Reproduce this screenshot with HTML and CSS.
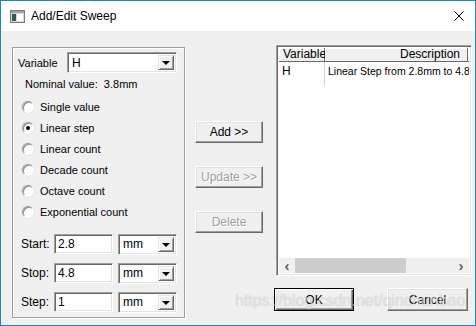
FILE: index.html
```html
<!DOCTYPE html>
<html lang="en">

<head>
    <meta charset="UTF-8">
    <title>Add/Edit Sweep</title>
    <link rel="stylesheet" href="styles.css">
</head>

<body>
    <div class="window">
        <div class="titlebar">
            <svg class="app-icon" width="15" height="13" viewBox="0 0 15 13">
                <rect x="0.5" y="0.5" width="14" height="12" fill="#d8d8d8" stroke="#7a7a7a"/>
                <rect x="1" y="1" width="13" height="2" fill="#9aa4a8"/>
                <rect x="2" y="4" width="4" height="7" fill="#2f5a58"/>
                <rect x="7" y="4" width="6" height="7" fill="#ffffff"/>
            </svg>
            <span class="title">Add/Edit Sweep</span>
            <svg class="close" width="10" height="10" viewBox="0 0 10 10">
                <path d="M0.5 0.5 L9.5 9.5 M9.5 0.5 L0.5 9.5" stroke="#000" stroke-width="1"/>
            </svg>
        </div>

        <div class="client">
            <div class="group">
                <div class="var-row">
                    <span class="var-label">Variable</span>
                    <div class="combo combo-var">
                        <span class="combo-text">H</span>
                        <span class="drop"><i></i></span>
                    </div>
                </div>

                <div class="nominal">Nominal value:&nbsp; 3.8mm</div>

                <div class="radios">
                    <div class="radio-row"><span class="radio"></span>Single value</div>
                    <div class="radio-row"><span class="radio checked"></span>Linear step</div>
                    <div class="radio-row"><span class="radio"></span>Linear count</div>
                    <div class="radio-row"><span class="radio"></span>Decade count</div>
                    <div class="radio-row"><span class="radio"></span>Octave count</div>
                    <div class="radio-row"><span class="radio"></span>Exponential count</div>
                </div>

                <div class="range">
                    <div class="range-row">
                        <span class="range-label">Start:</span>
                        <div class="field">2.8</div>
                        <div class="combo combo-unit">
                            <span class="combo-text">mm</span>
                            <span class="drop"><i></i></span>
                        </div>
                    </div>
                    <div class="range-row">
                        <span class="range-label">Stop:</span>
                        <div class="field">4.8</div>
                        <div class="combo combo-unit">
                            <span class="combo-text">mm</span>
                            <span class="drop"><i></i></span>
                        </div>
                    </div>
                    <div class="range-row">
                        <span class="range-label">Step:</span>
                        <div class="field">1</div>
                        <div class="combo combo-unit">
                            <span class="combo-text">mm</span>
                            <span class="drop"><i></i></span>
                        </div>
                    </div>
                </div>
            </div>

            <div class="actions">
                <button class="btn">Add &gt;&gt;</button>
                <button class="btn" disabled>Update &gt;&gt;</button>
                <button class="btn" disabled>Delete</button>
            </div>

            <div class="right">
                <div class="list">
                    <div class="list-body">
                        <div class="list-head">
                            <div class="col col-var">Variable</div>
                            <div class="col col-desc">Description</div>
                            <div class="col col-rest"></div>
                        </div>
                        <div class="list-row">
                            <div class="cell col-var">H</div>
                            <div class="cell col-desc">Linear Step from 2.8mm to 4.8mm</div>
                        </div>
                    </div>
                    <div class="hscroll">
                        <span class="arrow">&#8249;</span>
                        <div class="track"><div class="thumb"></div></div>
                        <span class="arrow">&#8250;</span>
                    </div>
                </div>
                <div class="footer">
                    <button class="btn btn-default">OK</button>
                    <button class="btn btn-cancel">Cancel</button>
                </div>
            </div>
        </div>

        <div class="watermark">https://blog.csdn.net/qinchunbao</div>
    </div>
</body>

</html>
```

FILE: styles.css
```css
* {
    box-sizing: border-box;
}

body {
    margin: 0;
    font-family: 'Liberation Sans', Arial, sans-serif;
    font-size: 11px;
    color: #000;
}

.window {
    position: relative;
    width: 476px;
    height: 326px;
    border: 1px solid #1883d7;
    background: #f0f0f0;
    overflow: hidden;
}

.titlebar {
    height: 30px;
    background: #fff;
    display: flex;
    align-items: center;
    padding-left: 9px;
    font-size: 12px;
}

.app-icon {
    margin-right: 6px;
}

.title {
    flex: 1;
}

.close {
    margin-right: 11px;
}

.client {
    display: flex;
    padding: 16px 0 0 11px;
}

/* left group box */
.group {
    width: 173px;
    height: 271px;
    border: 1px solid #a0a0a0;
    box-shadow: inset 1px 1px #fff, 1px 1px #fff;
    padding: 4px 0 0 5px;
}

.var-row {
    display: flex;
    align-items: center;
    height: 21px;
}

.var-label {
    width: 49px;
}

.combo,
.field {
    height: 21px;
    background: #fff;
    border: 1px solid;
    border-color: #a0a0a0 #fff #fff #a0a0a0;
    box-shadow: inset 1px 1px #696969, inset -1px -1px #e3e3e3;
}

.combo {
    display: flex;
    align-items: center;
    padding: 2px;
}

.combo-text {
    flex: 1;
    padding-left: 2px;
}

.combo-var {
    width: 110px;
    font-size: 12px;
}

.drop {
    width: 16px;
    height: 15px;
    background: #f0f0f0;
    border: 1px solid;
    border-color: #e3e3e3 #696969 #696969 #e3e3e3;
    box-shadow: inset 1px 1px #fff, inset -1px -1px #a0a0a0;
    display: flex;
    align-items: center;
    justify-content: center;
}

.drop i {
    width: 0;
    height: 0;
    border-left: 4px solid transparent;
    border-right: 4px solid transparent;
    border-top: 4px solid #000;
    margin-top: 1px;
}

.nominal {
    margin: 4px 0 0 7px;
    line-height: 14px;
}

.radios {
    margin-top: 5px;
}

.radio-row {
    display: flex;
    align-items: center;
    height: 21px;
    padding-left: 4px;
}

.radio {
    width: 12px;
    height: 12px;
    border-radius: 50%;
    background: #fff;
    border: 1px solid;
    border-color: #a0a0a0 #fff #fff #a0a0a0;
    box-shadow: inset 1px 1px #909090, 0 0 0 0.5px #d8d8d8;
    margin-right: 6px;
    position: relative;
}

.radio.checked::after {
    content: '';
    position: absolute;
    left: 3px;
    top: 3px;
    width: 4px;
    height: 4px;
    border-radius: 50%;
    background: #000;
}

.range {
    margin-top: 12px;
    display: flex;
    flex-direction: column;
    gap: 9px;
}

.range-row {
    display: flex;
    align-items: center;
    height: 20px;
    padding-left: 3px;
    font-size: 12px;
}

.range-label {
    width: 33px;
}

.field {
    width: 59px;
    height: 20px;
    padding: 2px 0 0 3px;
}

.combo-unit {
    width: 59px;
    height: 21px;
    margin-left: 5px;
}

/* middle buttons */
.actions {
    width: 68px;
    margin-left: 10px;
    padding-top: 74px;
    display: flex;
    flex-direction: column;
    gap: 23px;
}

.btn {
    height: 22px;
    background: #f0f0f0;
    border: 1px solid;
    border-color: #fff #696969 #696969 #fff;
    box-shadow: inset -1px -1px #a0a0a0, inset 1px 1px #e3e3e3;
    font-family: 'Liberation Sans', Arial, sans-serif;
    font-size: 12px;
    color: #000;
    padding: 0;
}

.btn:disabled {
    color: #a0a0a0;
    text-shadow: 1px 1px #fff;
}

/* right column */
.right {
    margin-left: 11px;
    margin-top: -2px;
    width: 197px;
}

.list {
    margin-left: 2px;
    width: 196px;
    height: 231px;
    background: #fff;
    border: 1px solid;
    border-color: #a0a0a0 #fff #fff #a0a0a0;
    box-shadow: inset 1px 1px #696969, inset -1px -1px #e3e3e3;
    padding: 2px;
    display: flex;
    flex-direction: column;
}

.list-body {
    flex: 1;
    overflow: hidden;
}

.list-head,
.list-row {
    display: flex;
    white-space: nowrap;
}

.list-head .col {
    height: 14px;
    line-height: 13px;
    background: #f0f0f0;
    border-right: 1px solid #696969;
    border-bottom: 1px solid #696969;
    box-shadow: inset 1px 1px #fff;
    font-size: 12px;
}

.col-var {
    width: 46px;
    flex: none;
    padding-left: 4px;
}

.col-desc {
    width: 143px;
    flex: none;
    text-align: right;
    padding-right: 7px;
}

.list-head .col-rest {
    flex: 1;
    border-right: none;
}

.list-row {
    height: 24px;
    font-size: 10.5px;
}

.cell {
    padding-top: 3px;
}

.list-row .col-var {
    border-right: 1px solid #d0d0d0;
    padding-left: 3px;
    font-size: 12px;
    padding-top: 2px;
}

.list-row .col-desc {
    width: auto;
    text-align: left;
    padding-left: 3px;
}

.hscroll {
    height: 15px;
    display: flex;
    align-items: center;
    background: #f0f0f0;
}

.arrow {
    width: 16px;
    text-align: center;
    color: #606060;
    font-size: 15px;
    font-weight: bold;
    line-height: 15px;
}

.track {
    flex: 1;
    height: 15px;
}

.thumb {
    width: 111px;
    height: 15px;
    background: #cdcdcd;
}

.footer {
    display: flex;
    gap: 33px;
    margin-top: 12px;
}

.footer .btn {
    height: 23px;
}

.btn-default {
    width: 80px;
    border: 1px solid #000;
    box-shadow: inset 1px 1px #fff, inset -1px -1px #696969, inset -2px -2px #a0a0a0;
}

.btn-cancel {
    width: 81px;
}

.watermark {
    position: absolute;
    left: 234px;
    top: 291px;
    font-size: 16px;
    color: rgba(255, 255, 255, 0.5);
    text-shadow: 0 0 1px rgba(120, 120, 120, 0.45);
    pointer-events: none;
}
```
